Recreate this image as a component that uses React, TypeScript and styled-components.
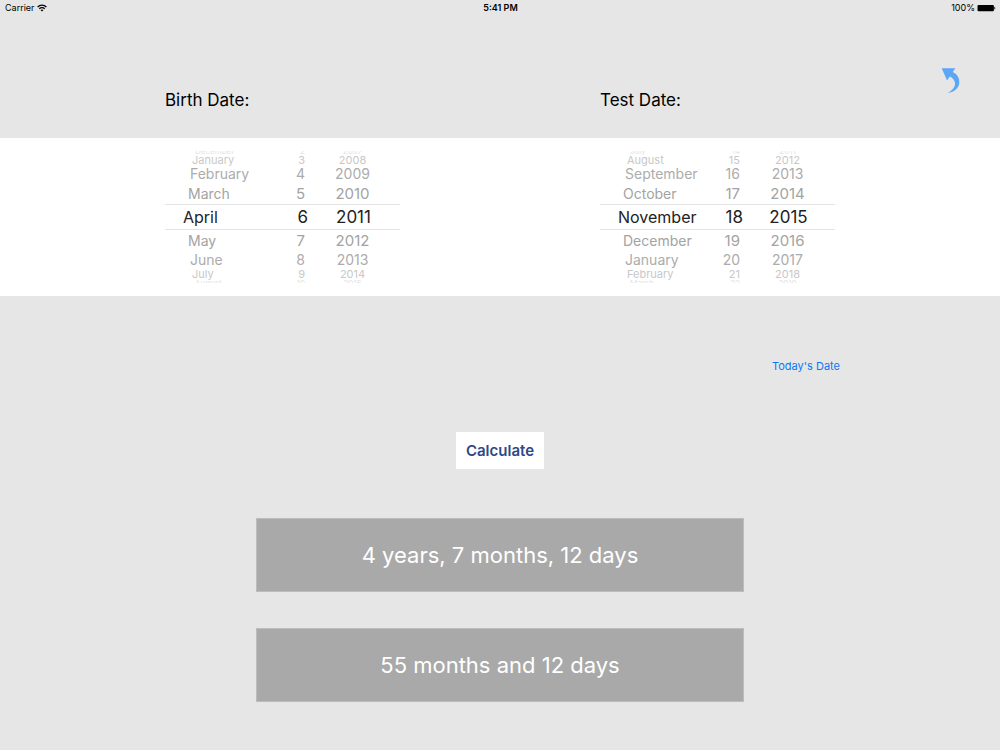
import React, { useState } from "react";
import styled, { createGlobalStyle } from "styled-components";

const GlobalStyle = createGlobalStyle`
  * { box-sizing: border-box; }
  body {
    margin: 0;
    background: #e6e6e6;
    color: #000;
    font-family: Inter, "Liberation Sans", sans-serif;
  }
  button {
    border: 0;
    padding: 0;
    margin: 0;
    background: none;
    color: inherit;
    font: inherit;
    cursor: pointer;
  }
`;

const Page = styled.div`
  display: flex;
  flex-direction: column;
  min-height: 100vh;
  padding-bottom: 48px;
`;

const StatusBar = styled.div`
  display: grid;
  grid-template-columns: 1fr auto 1fr;
  align-items: center;
  height: 16px;
  padding: 0 4px 0 5px;
  font-size: 9px;
  line-height: 16px;
`;

const StatusGroup = styled.div<{ $end?: boolean }>`
  display: flex;
  align-items: center;
  justify-content: ${(p) => (p.$end ? "flex-end" : "flex-start")};
  gap: 2px;
`;

const Clock = styled.time`
  font-weight: 600;
`;

const TopBar = styled.header`
  display: flex;
  justify-content: flex-end;
  height: 74px;
  padding: 50px 38px 0 0;
`;

const BackButton = styled.button`
  display: flex;
  height: 30px;
`;

const Labels = styled.div`
  display: flex;
  justify-content: space-between;
  height: 48px;
  padding: 0 16.5%;
`;

const DateLabel = styled.h2`
  width: 235px;
  margin: 0;
  font-size: 17px;
  font-weight: 400;
  line-height: 20px;
`;

const PickerBand = styled.section`
  display: flex;
  justify-content: space-between;
  padding: 13px 16.5%;
  background: #fff;
`;

const Picker = styled.div`
  display: grid;
  grid-template-columns: 104px 48px 83px;
  width: 235px;
`;

const Wheel = styled.div`
  display: flex;
  flex-direction: column;
`;

type Kind = "month" | "day" | "year";

/* Row looks by distance from the selected row. */
const ROWS = [
  { height: 26, month: 16, digits: 17, color: "#222", inset: 0 },
  { height: 21, month: 14, digits: 15, color: "#a3a3a3", inset: 5 },
  { height: 18, month: 14, digits: 14, color: "#acacac", inset: 7 },
  { height: 10, month: 11, digits: 11, color: "#c8c8c8", inset: 9 },
  { height: 4, month: 8, digits: 8, color: "#e4e4e4", inset: 12 },
];

const JUSTIFY = { month: "flex-start", day: "flex-end", year: "center" };

const rowPadding = (kind: Kind, depth: number) => {
  if (kind === "month") return `0 0 0 ${18 + ROWS[depth].inset}px`;
  if (kind === "day") return `0 ${depth === 0 ? 9 : 12}px 0 0`;
  return `0 ${depth === 0 ? 10 : 12}px 0 0`;
};

const rowAlign = (offset: number) => {
  if (offset === -4) return "flex-end";
  return offset === 4 ? "flex-start" : "center";
};

const WheelRow = styled.button<{ $kind: Kind; $depth: number; $offset: number }>`
  display: flex;
  align-items: ${(p) => rowAlign(p.$offset)};
  justify-content: ${(p) => JUSTIFY[p.$kind]};
  height: ${(p) => ROWS[p.$depth].height}px;
  padding: ${(p) => rowPadding(p.$kind, p.$depth)};
  border: solid #e4e4e4;
  border-width: ${(p) => (p.$depth === 0 ? "1px 0" : "0")};
  overflow: ${(p) => (p.$depth === 4 ? "hidden" : "visible")};
  color: ${(p) => ROWS[p.$depth].color};
  font-size: ${(p) => (p.$kind === "month" ? ROWS[p.$depth].month : ROWS[p.$depth].digits)}px;
  line-height: 1;
  white-space: nowrap;
`;

const TodayRow = styled.div`
  display: flex;
  justify-content: flex-end;
  padding: 62px 16% 0;
`;

const TodayButton = styled.button`
  color: #0a78f5;
  font-size: 11px;
  line-height: 16px;
`;

const CalculateButton = styled.button`
  align-self: center;
  width: 88px;
  height: 37px;
  margin: 58px 0 49px;
  background: #fff;
  color: #2c4a86;
  font-size: 15px;
  font-weight: 600;
`;

const Results = styled.div`
  display: flex;
  flex-direction: column;
  gap: 36px;
  padding: 0 25.6%;
`;

const Result = styled.output`
  display: flex;
  align-items: center;
  justify-content: center;
  min-height: 74px;
  border: 1px solid #bcbcbc;
  background: #a9a9a9;
  color: #fff;
  font-size: 22px;
  line-height: 28px;
`;

const MONTHS = [
  "January", "February", "March", "April", "May", "June",
  "July", "August", "September", "October", "November", "December",
];

interface DateValue {
  year: number;
  month: number;
  day: number;
}

const OFFSETS = [-4, -3, -2, -1, 0, 1, 2, 3, 4];
const wrap = (n: number, size: number) => ((n % size) + size) % size;
const daysIn = (year: number, month: number) => new Date(year, month + 1, 0).getDate();

function valueAt(date: DateValue, kind: Kind, offset: number) {
  if (kind === "year") return date.year + offset;
  if (kind === "month") return wrap(date.month + offset, 12);
  return wrap(date.day - 1 + offset, daysIn(date.year, date.month)) + 1;
}

function difference(from: DateValue, to: DateValue) {
  let months = (to.year - from.year) * 12 + to.month - from.month;
  let days = to.day - from.day;
  if (days < 0) {
    months -= 1;
    days += daysIn(to.year, to.month - 1);
  }
  return { months, days };
}

function DatePicker({ label, value, onChange }: {
  label: string;
  value: DateValue;
  onChange: (value: DateValue) => void;
}) {
  const pick = (kind: Kind, next: number) => {
    const date = { ...value, [kind]: next };
    onChange({ ...date, day: Math.min(date.day, daysIn(date.year, date.month)) });
  };
  return (
    <Picker role="group" aria-labelledby={label}>
      {(["month", "day", "year"] as Kind[]).map((kind) => (
        <Wheel key={kind} role="listbox" aria-label={kind}>
          {OFFSETS.map((offset) => {
            const item = valueAt(value, kind, offset);
            return (
              <WheelRow
                key={offset}
                type="button"
                role="option"
                aria-selected={offset === 0}
                $kind={kind}
                $depth={Math.abs(offset)}
                $offset={offset}
                onClick={() => pick(kind, item)}
              >
                {kind === "month" ? MONTHS[item] : item}
              </WheelRow>
            );
          })}
        </Wheel>
      ))}
    </Picker>
  );
}

function WifiIcon() {
  return (
    <svg width="10" height="8" viewBox="0 0 10 8" fill="none" stroke="#000" strokeWidth="1.3" aria-hidden="true">
      <path d="M.6 3C3.1.5 6.9.5 9.4 3M2.300 4.700C3.800 3.200 6.200 3.200 7.700 4.700" />
      <path d="M5 7.600L3.500 6.100C4.300 5.200 5.700 5.200 6.500 6.100Z" fill="#000" stroke="none" />
    </svg>
  );
}

function BatteryIcon() {
  return (
    <svg width="19" height="8" viewBox="0 0 19 8" aria-hidden="true">
      <rect x=".5" y=".9" width="16.4" height="6.4" rx="1" fill="#000" />
      <path d="M17.400 2.700C18.600 3 18.600 5.200 17.400 5.500Z" fill="#000" />
    </svg>
  );
}

function BackIcon() {
  return (
    <svg width="22" height="30" viewBox="0 0 22 30" aria-hidden="true">
      <path
        d="M1.700 2.200L15.300 2.200L12.800 5.900C17.500 8 19.900 12.500 19.200 17.200C18.400 22.500 14 26.300 7.500 26.800C12.500 24.600 15.400 21 15 17C14.700 14 12.600 11.600 9.700 10.400L7.100 14.500Z"
        fill="#5ba6f7"
      />
    </svg>
  );
}

export default function App() {
  const [birth, setBirth] = useState<DateValue>({ year: 2011, month: 3, day: 6 });
  const [test, setTest] = useState<DateValue>({ year: 2015, month: 10, day: 18 });
  const [age, setAge] = useState(() => difference(birth, test));

  const pickToday = () => {
    const now = new Date();
    setTest({ year: now.getFullYear(), month: now.getMonth(), day: now.getDate() });
  };

  return (
    <>
      <GlobalStyle />
      <Page>
        <StatusBar>
          <StatusGroup>
            Carrier
            <WifiIcon />
          </StatusGroup>
          <Clock>5:41 PM</Clock>
          <StatusGroup $end>
            100%
            <BatteryIcon />
          </StatusGroup>
        </StatusBar>
        <TopBar>
          <BackButton type="button" aria-label="Back">
            <BackIcon />
          </BackButton>
        </TopBar>
        <Labels>
          <DateLabel id="birth-date">Birth Date:</DateLabel>
          <DateLabel id="test-date">Test Date:</DateLabel>
        </Labels>
        <PickerBand>
          <DatePicker label="birth-date" value={birth} onChange={setBirth} />
          <DatePicker label="test-date" value={test} onChange={setTest} />
        </PickerBand>
        <TodayRow>
          <TodayButton type="button" onClick={pickToday}>Today's Date</TodayButton>
        </TodayRow>
        <CalculateButton type="button" onClick={() => setAge(difference(birth, test))}>
          Calculate
        </CalculateButton>
        <Results>
          <Result>
            {`${Math.floor(age.months / 12)} years, ${age.months % 12} months, ${age.days} days`}
          </Result>
          <Result>{`${age.months} months and ${age.days} days`}</Result>
        </Results>
      </Page>
    </>
  );
}
